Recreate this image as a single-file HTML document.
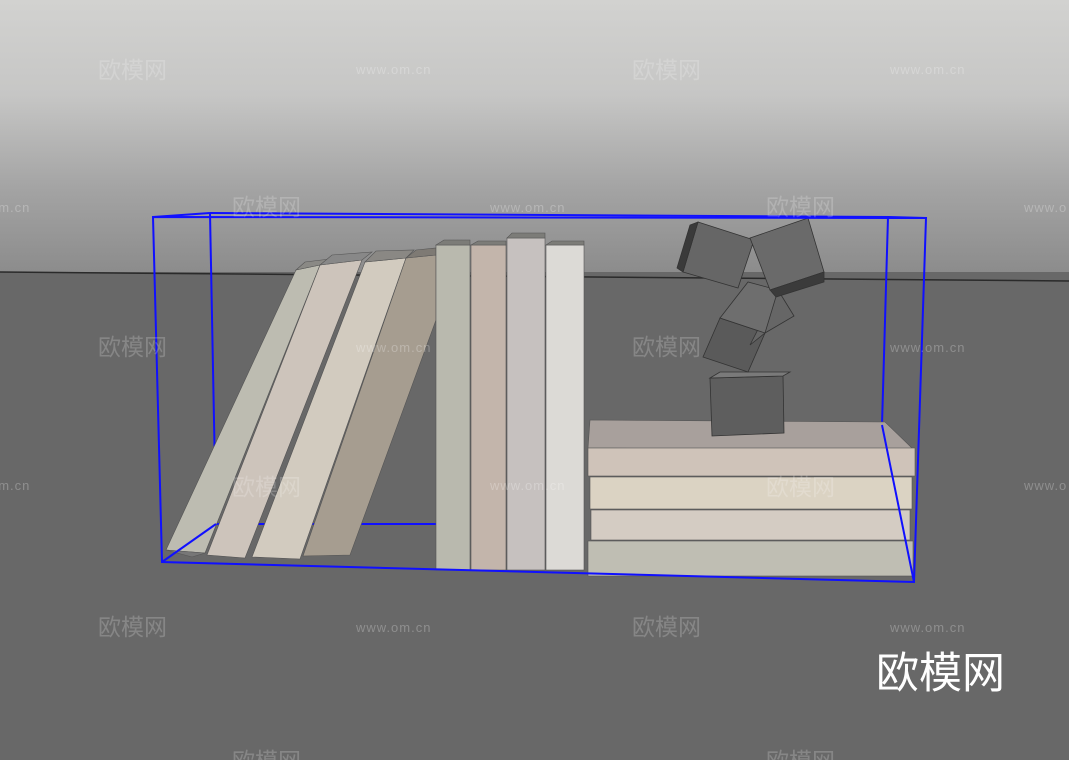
<!DOCTYPE html>
<html><head><meta charset="utf-8"><style>
html,body{margin:0;padding:0;width:1069px;height:760px;overflow:hidden;background:#676767}
svg{display:block}
.wm{font-family:"Liberation Sans","Noto Sans CJK SC",sans-serif;fill:rgba(255,255,255,0.2);font-size:23px}
.wu{font-family:"Liberation Sans",sans-serif;fill:rgba(255,255,255,0.25);font-size:13px;letter-spacing:1px}
</style></head><body>
<svg width="1069" height="760" viewBox="0 0 1069 760" xmlns="http://www.w3.org/2000/svg">
<defs>
<linearGradient id="sky" x1="0" y1="0" x2="0" y2="1">
<stop offset="0" stop-color="#d2d2d0"/><stop offset="0.35" stop-color="#c6c6c5"/><stop offset="0.7" stop-color="#a3a3a3"/><stop offset="1" stop-color="#8c8c8c"/>
</linearGradient>
</defs>
<rect x="0" y="0" width="1069" height="272" fill="url(#sky)"/>
<rect x="0" y="272" width="1069" height="488" fill="#686868"/>
<line x1="0" y1="272" x2="1069" y2="281" stroke="#2a2a2a" stroke-width="1.5"/>

<g stroke="#1010ff" stroke-width="2" fill="none">
<polyline points="210,213 888,217 882,425"/>
<line x1="210" y1="213" x2="216" y2="524"/>
<line x1="216" y1="524" x2="436" y2="524"/>
</g>

<g stroke="#555" stroke-width="0.6">
<polygon points="296,270 320,265 205,553 166,550" fill="#bdbcb1"/>
<polygon points="166,550 205,553 192,557" fill="#777"/>
<polygon points="296,270 305,262 330,259 320,265" fill="#8a8985"/>
<polygon points="320,265 362,260 245,558 207,555" fill="#cdc4bb"/>
<polygon points="320,265 332,255 372,252 362,260" fill="#888"/>
<polygon points="365,262 406,258 300,559 252,557" fill="#d2cbbf"/>
<polygon points="365,262 376,251 414,250 406,258" fill="#8a8884"/>
<polygon points="406,258 436,255 436,320 350,555 303,556" fill="#a69d90"/>
<polygon points="406,258 416,250 436,248 436,255" fill="#7e7a74"/>
</g>
<g stroke="#555" stroke-width="0.6">
<rect x="436" y="245" width="34" height="325" fill="#b9b9ae"/>
<polygon points="436,245 444,240 470,240 470,245" fill="#7c7c78"/>
<rect x="471" y="245" width="35" height="325" fill="#c3b5ab"/>
<polygon points="471,245 478,241 506,241 506,245" fill="#7c7c78"/>
<rect x="507" y="238" width="38" height="332" fill="#c6c1bf"/>
<polygon points="507,238 512,233 545,233 545,238" fill="#7c7c78"/>
<rect x="546" y="245" width="38" height="325" fill="#dcdad6"/>
<polygon points="546,245 552,241 584,241 584,245" fill="#7c7c78"/>
</g>
<g stroke="#555" stroke-width="0.6">
<polygon points="590,420 885,422 914,450 588,448" fill="#a8a09c"/>
<rect x="588" y="448" width="327" height="28" fill="#cfc3b9"/>
<rect x="590" y="477" width="322" height="32" fill="#dbd3c3"/>
<rect x="591" y="510" width="319" height="30" fill="#d4ccc3"/>
<rect x="588" y="541" width="325" height="35" fill="#bfbeb3"/>
</g>
<g stroke="#333" stroke-width="0.8">
<polygon points="710,378 783,376 784,433 712,436" fill="#5e5e5e"/>
<polygon points="710,378 720,372 790,372 783,376" fill="#7a7a7a"/>
<polygon points="720,318 765,333 748,372 703,357" fill="#5a5a5a"/>
<polygon points="765,333 794,316 778,290 750,345" fill="#666"/>
<polygon points="720,318 748,282 778,290 765,333" fill="#6e6e6e"/>
<polygon points="698,222 754,240 738,288 683,272" fill="#666"/>
<polygon points="683,272 698,222 690,225 677,268" fill="#3a3a3a"/>
<polygon points="750,238 808,218 824,272 770,290" fill="#6a6a6a"/>
<polygon points="770,290 824,272 824,282 776,297" fill="#3b3b3b"/>
</g>

<g stroke="#1010ff" stroke-width="2" fill="none">
<polygon points="153,217 926,218 914,582 162,562"/>
<line x1="153" y1="217" x2="210" y2="213"/>
<line x1="926" y1="218" x2="888" y2="217"/>
<line x1="162" y1="562" x2="216" y2="524"/>
<line x1="914" y1="582" x2="882" y2="425"/>
</g>

<g class="wm">
<text x="98" y="78">欧模网</text><text x="632" y="78">欧模网</text>
<text x="232" y="215">欧模网</text><text x="766" y="215">欧模网</text>
<text x="98" y="355">欧模网</text><text x="632" y="355">欧模网</text>
<text x="232" y="495">欧模网</text><text x="766" y="495">欧模网</text>
<text x="98" y="635">欧模网</text><text x="632" y="635">欧模网</text>
<text x="232" y="769">欧模网</text><text x="766" y="769">欧模网</text>
</g>
<g class="wu">
<text x="356" y="74">www.om.cn</text><text x="890" y="74">www.om.cn</text>
<text x="-10" y="212">om.cn</text><text x="490" y="212">www.om.cn</text><text x="1024" y="212">www.o</text>
<text x="356" y="352">www.om.cn</text><text x="890" y="352">www.om.cn</text>
<text x="-10" y="490">om.cn</text><text x="490" y="490">www.om.cn</text><text x="1024" y="490">www.o</text>
<text x="356" y="632">www.om.cn</text><text x="890" y="632">www.om.cn</text>
</g>
<text x="876" y="688" font-family="'Liberation Sans','Noto Sans CJK SC',sans-serif" font-size="43" fill="#ffffff">欧模网</text>
</svg>
</body></html>
